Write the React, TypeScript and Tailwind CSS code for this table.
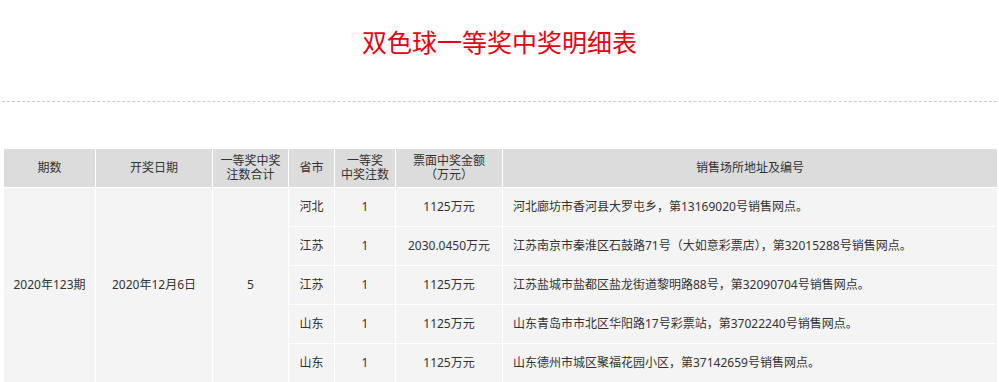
import React from "react";

type Winner = {
  province: string;
  count: string;
  amount: string;
  address: string;
};

const WINNERS: Winner[] = [
  { province: "河北", count: "1", amount: "1125万元", address: "河北廊坊市香河县大罗屯乡，第13169020号销售网点。" },
  { province: "江苏", count: "1", amount: "2030.0450万元", address: "江苏南京市秦淮区石鼓路71号（大如意彩票店），第32015288号销售网点。" },
  { province: "江苏", count: "1", amount: "1125万元", address: "江苏盐城市盐都区盐龙街道黎明路88号，第32090704号销售网点。" },
  { province: "山东", count: "1", amount: "1125万元", address: "山东青岛市市北区华阳路17号彩票站，第37022240号销售网点。" },
  { province: "山东", count: "1", amount: "1125万元", address: "山东德州市城区聚福花园小区，第37142659号销售网点。" },
];

const cell = "border border-white text-center align-middle h-[39px] p-0";

export default function App() {
  return (
    <div className="w-[999px] min-h-[382px] bg-white font-['Noto_Sans','Noto_Sans_CJK_SC',sans-serif] text-[#333]">
      <div className="h-[101px] pt-[26px] text-center">
        <h1 className="text-[25px] leading-[30px] text-[#e60012] font-normal font-['Noto_Sans_CJK_SC',sans-serif]">
          双色球一等奖中奖明细表
        </h1>
      </div>
      <div className="mx-[2px] border-t border-dashed border-[#cccccc]" />

      <table className="mt-[46px] ml-[3px] w-[995px] table-fixed border-collapse text-[12px] leading-[14px]">
        <colgroup>
          <col className="w-[92px]" />
          <col className="w-[117px]" />
          <col className="w-[76px]" />
          <col className="w-[46px]" />
          <col className="w-[61px]" />
          <col className="w-[107px]" />
          <col />
        </colgroup>
        <thead>
          <tr className="bg-[#dcdcdc]">
            <th className={`${cell} font-normal`}>期数</th>
            <th className={`${cell} font-normal`}>开奖日期</th>
            <th className={`${cell} font-normal`}>
              一等奖中奖
              <br />
              注数合计
            </th>
            <th className={`${cell} font-normal`}>省市</th>
            <th className={`${cell} font-normal`}>
              一等奖
              <br />
              中奖注数
            </th>
            <th className={`${cell} font-normal`}>
              票面中奖金额
              <br />
              （万元）
            </th>
            <th className={`${cell} font-normal`}>销售场所地址及编号</th>
          </tr>
        </thead>
        <tbody className="bg-[#f4f4f4]">
          {WINNERS.map((w, i) => (
            <tr key={i}>
              {i === 0 && (
                <>
                  <td rowSpan={WINNERS.length} className={cell}>
                    2020年123期
                  </td>
                  <td rowSpan={WINNERS.length} className={cell}>
                    2020年12月6日
                  </td>
                  <td rowSpan={WINNERS.length} className={cell}>
                    5
                  </td>
                </>
              )}
              <td className={cell}>{w.province}</td>
              <td className={cell}>{w.count}</td>
              <td className={cell}>{w.amount}</td>
              <td className={`${cell} !text-left pl-[10px]`}>{w.address}</td>
            </tr>
          ))}
        </tbody>
      </table>
    </div>
  );
}
